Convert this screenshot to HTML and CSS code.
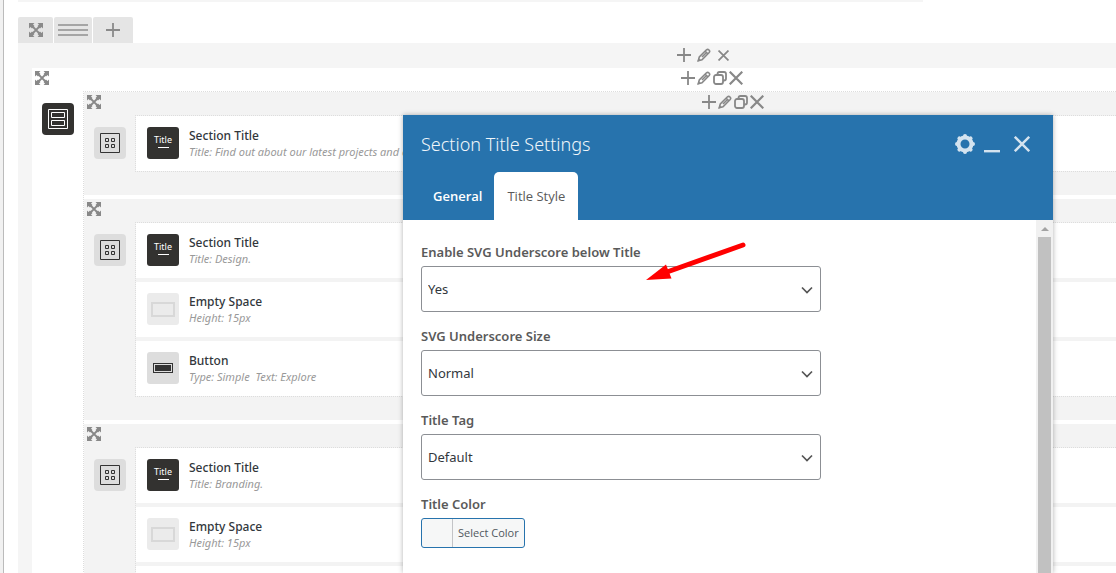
FILE: index.html
```html
<!DOCTYPE html>
<html lang="en">
<head>
    <meta charset="UTF-8">
    <meta name="viewport" content="width=device-width, initial-scale=1.0">
    <title>Page Builder</title>
    <link rel="stylesheet" href="styles.css">
</head>
<body>
    <!-- Shared icons -->
    <svg class="sprite" aria-hidden="true">
        <symbol id="move" viewBox="0 0 14 14">
            <path d="M0 0h5.500L4 1.500 5.500 3 3 5.500 1.500 4 0 5.500zM14 0v5.500L12.500 4 11 5.500 8.500 3 10 1.500 8.500 0zM0 14V8.500L1.500 10 3 8.500 5.500 11 4 12.500 5.500 14zM14 14H8.500l1.500-1.500L8.500 11 11 8.500l1.500 1.500L14 8.500z"/>
            <path class="line" d="M3 3l8 8M11 3l-8 8"/>
        </symbol>
        <symbol id="plus" viewBox="0 0 14 14"><path class="line" d="M7 0v14M0 7h14"/></symbol>
        <symbol id="edit" viewBox="0 0 14 14">
            <path class="outline" d="M1.300 12.700l1-3.700 7.200-7.200q1.200-1.100 2.500.2t.2 2.500L5 11.700zM8.200 3.200l2.600 2.600M5 9l4-4"/>
            <path d="M.3 13.700l1.200-3.700 2.500 2.500z"/>
        </symbol>
        <symbol id="copy" viewBox="0 0 14 14">
            <rect class="line" x="1" y="4" width="9" height="9" rx="2"/>
            <path class="line" d="M4.500 4V3q0-2 2-2H11q2 0 2 2v4.500q0 2-2 2h-1"/>
        </symbol>
        <symbol id="close" viewBox="0 0 14 14"><path class="cross" d="M.7.7l12.600 12.600M13.300.7L.7 13.300"/></symbol>
        <symbol id="row" viewBox="0 0 20 20"><path class="thin" d="M.5.500h19v19H.5zM3.500 3.500h13v5h-13zM3.500 11.500h13v5h-13z"/></symbol>
        <symbol id="grid" viewBox="0 0 20 20"><path class="thin" d="M.5.500h19v19H.5zM5.500 5.500h3v3h-3zM11.500 5.500h3v3h-3zM5.500 11.500h3v3h-3zM11.500 11.500h3v3h-3z"/></symbol>
    </svg>

    <div class="page">
        <div class="previous"></div>

        <div class="tabs">
            <button class="tab tab-move" aria-label="Move section"><svg class="icon"><use href="#move"/></svg></button>
            <button class="tab tab-layout" aria-label="Row layout"><span class="bars"></span></button>
            <button class="tab tab-add" aria-label="Add row"><svg class="icon"><use href="#plus"/></svg></button>
        </div>

        <div class="section">
            <div class="controls section-controls">
                <button aria-label="Add"><svg class="icon"><use href="#plus"/></svg></button>
                <button aria-label="Edit"><svg class="icon"><use href="#edit"/></svg></button>
                <button aria-label="Delete"><svg class="icon small"><use href="#close"/></svg></button>
            </div>

            <div class="row">
                <div class="bar">
                    <button class="move" aria-label="Move row"><svg class="icon"><use href="#move"/></svg></button>
                    <div class="controls">
                        <button aria-label="Add"><svg class="icon"><use href="#plus"/></svg></button>
                        <button aria-label="Edit"><svg class="icon pen"><use href="#edit"/></svg></button>
                        <button aria-label="Copy"><svg class="icon"><use href="#copy"/></svg></button>
                        <button aria-label="Delete"><svg class="icon"><use href="#close"/></svg></button>
                    </div>
                </div>

                <div class="row-body">
                    <div class="handle dark"><svg class="badge"><use href="#row"/></svg></div>

                    <div class="columns">
                        <div class="column">
                            <div class="bar">
                                <button class="move" aria-label="Move column"><svg class="icon"><use href="#move"/></svg></button>
                                <div class="controls">
                                    <button aria-label="Add"><svg class="icon"><use href="#plus"/></svg></button>
                                    <button aria-label="Edit"><svg class="icon pen"><use href="#edit"/></svg></button>
                                    <button aria-label="Copy"><svg class="icon"><use href="#copy"/></svg></button>
                                    <button aria-label="Delete"><svg class="icon"><use href="#close"/></svg></button>
                                </div>
                            </div>
                            <div class="column-body">
                                <div class="handle"><svg class="badge"><use href="#grid"/></svg></div>
                                <div class="elements">
                                    <div class="element">
                                        <div class="thumb title-thumb">Title</div>
                                        <div class="text">
                                            <h4>Section Title</h4>
                                            <p>Title: Find out about our latest projects and ex</p>
                                        </div>
                                    </div>
                                </div>
                            </div>
                        </div>

                        <div class="column">
                            <div class="bar">
                                <button class="move" aria-label="Move column"><svg class="icon"><use href="#move"/></svg></button>
                            </div>
                            <div class="column-body">
                                <div class="handle"><svg class="badge"><use href="#grid"/></svg></div>
                                <div class="elements">
                                    <div class="element">
                                        <div class="thumb title-thumb">Title</div>
                                        <div class="text">
                                            <h4>Section Title</h4>
                                            <p>Title: Design.</p>
                                        </div>
                                    </div>
                                    <div class="element">
                                        <div class="thumb space-thumb"></div>
                                        <div class="text">
                                            <h4>Empty Space</h4>
                                            <p>Height: 15px</p>
                                        </div>
                                    </div>
                                    <div class="element">
                                        <div class="thumb button-thumb"></div>
                                        <div class="text">
                                            <h4>Button</h4>
                                            <p>Type: Simple&nbsp; Text: Explore</p>
                                        </div>
                                    </div>
                                </div>
                            </div>
                        </div>

                        <div class="column">
                            <div class="bar">
                                <button class="move" aria-label="Move column"><svg class="icon"><use href="#move"/></svg></button>
                            </div>
                            <div class="column-body">
                                <div class="handle"><svg class="badge"><use href="#grid"/></svg></div>
                                <div class="elements">
                                    <div class="element">
                                        <div class="thumb title-thumb">Title</div>
                                        <div class="text">
                                            <h4>Section Title</h4>
                                            <p>Title: Branding.</p>
                                        </div>
                                    </div>
                                    <div class="element">
                                        <div class="thumb space-thumb"></div>
                                        <div class="text">
                                            <h4>Empty Space</h4>
                                            <p>Height: 15px</p>
                                        </div>
                                    </div>
                                    <div class="element"></div>
                                </div>
                            </div>
                        </div>
                    </div>
                </div>
            </div>
        </div>
    </div>

    <div class="dialog" role="dialog" aria-labelledby="dialog-title">
        <div class="dialog-header">
            <div class="dialog-top">
                <h2 id="dialog-title">Section Title Settings</h2>
                <div class="dialog-actions">
                    <button aria-label="Settings">
                        <svg width="20" height="20" viewBox="0 0 20 20" fill="none" stroke="currentColor">
                            <circle cx="10" cy="10" r="6.500" stroke-width="4"/>
                            <path stroke-width="4" stroke-linecap="round" d="M10 2v.5M10 17.500v.5M2 10h.5M17.500 10h.5M4.400 4.400l.4.4M15.200 15.200l.4.4M15.600 4.400l-.4.4M4.800 15.200l-.4.4"/>
                        </svg>
                    </button>
                    <button aria-label="Minimize">
                        <svg width="16" height="20" viewBox="0 0 16 20"><path fill="currentColor" d="M0 16h16v2.400H0z"/></svg>
                    </button>
                    <button aria-label="Close">
                        <svg width="16" height="16" viewBox="0 0 16 16"><path fill="none" stroke="currentColor" stroke-width="2.400" d="M.8.8l14.400 14.400M15.200.8L.8 15.200"/></svg>
                    </button>
                </div>
            </div>
            <div class="dialog-tabs">
                <button class="dialog-tab">General</button>
                <button class="dialog-tab active">Title Style</button>
            </div>
        </div>

        <div class="dialog-body">
            <form class="fields">
                <div class="field">
                    <label for="underscore">Enable SVG Underscore below Title</label>
                    <select id="underscore"><option>Yes</option><option>No</option></select>
                </div>
                <div class="field">
                    <label for="size">SVG Underscore Size</label>
                    <select id="size"><option>Normal</option><option>Large</option></select>
                </div>
                <div class="field">
                    <label for="tag">Title Tag</label>
                    <select id="tag"><option>Default</option><option>h1</option><option>h2</option></select>
                </div>
                <div class="field">
                    <label for="color">Title Color</label>
                    <button type="button" id="color" class="color-button"><span>Select Color</span></button>
                </div>
            </form>
            <div class="scrollbar">
                <div class="scroll-arrow"></div>
                <div class="scroll-thumb"></div>
            </div>
        </div>

        <!-- Pointer to the underscore option -->
        <svg class="pointer" width="102" height="42" viewBox="0 0 102 42" aria-hidden="true">
            <path d="M98 4L22 31" stroke="#f00" stroke-width="5" stroke-linecap="round"/>
            <path d="M1 39L21 23.500l5.500 14z" fill="#f00"/>
        </svg>
    </div>
</body>
</html>
```

FILE: styles.css
```css
*, *::before, *::after {
    box-sizing: border-box;
}
body {
    margin: 0;
    height: 100vh;
    overflow: hidden;
    position: relative;
    background-color: #f1f1f1;
    font-family: "Noto Sans", "Open Sans", sans-serif;
    font-size: 13px;
    color: #32373c;
}
button {
    border: none;
    padding: 0;
    background: none;
    font-family: inherit;
    color: inherit;
    cursor: pointer;
    display: flex;
    align-items: center;
    justify-content: center;
}
h2, h4, p {
    margin: 0;
}
.sprite {
    position: absolute;
    width: 0;
    height: 0;
}
.line {
    fill: none;
    stroke: currentColor;
    stroke-width: 1.8;
}
.outline {
    fill: none;
    stroke: currentColor;
    stroke-width: 1.6;
}
.cross {
    fill: none;
    stroke: currentColor;
    stroke-width: 2.2;
}
.thin {
    fill: none;
    stroke: currentColor;
    stroke-width: 1;
}
.icon {
    width: 14px;
    height: 14px;
    fill: currentColor;
    display: block;
}
.icon.small {
    width: 11px;
    height: 11px;
}

/* Builder */
.page {
    height: 100vh;
    overflow: hidden;
    margin-left: 3px;
    padding-left: 14px;
    border-left: 1px solid #bbb;
    background-color: #fff;
}
.previous {
    height: 2px;
    width: 82.4%;
    background-color: #f5f5f5;
}
.tabs {
    display: flex;
    gap: 1px;
    margin-top: 15px;
}
.tab {
    height: 26px;
    background-color: #e5e5e5;
    color: #8a8a8a;
    border-radius: 2px 2px 0 0;
}
.tab-move {
    width: 35px;
}
.tab-layout {
    width: 38px;
}
.tab-add {
    width: 40px;
}
.bars {
    width: 30px;
    height: 12px;
    border-top: 2px solid #a5a5a5;
    border-bottom: 2px solid #a5a5a5;
    background: linear-gradient(#a5a5a5, #a5a5a5) center / 100% 2px no-repeat;
}
.section {
    background-color: #f5f5f5;
    padding-left: 14px;
}
.controls {
    display: flex;
    align-items: center;
    gap: 2px;
    color: #888;
}
.section-controls {
    height: 25px;
    padding: 0 0 1px 59.5%;
    gap: 6px;
}
.section-controls .small {
    margin-left: 1px;
}
.row {
    background-color: #fff;
}
.bar {
    display: flex;
    align-items: center;
    height: 23px;
    padding-bottom: 3px;
}
.bar .move {
    width: 20px;
    color: #888;
}
.bar .controls {
    margin-left: calc(60% - 21px);
}
.row-body {
    display: flex;
}
.row-body > .handle {
    margin: 12px 9px 0 10px;
}
.handle {
    display: flex;
    align-items: center;
    justify-content: center;
    flex: none;
    width: 32px;
    height: 32px;
    border-radius: 4px;
    background-color: #ddd;
    color: #333;
}
.handle.dark {
    background-color: #333230;
    color: #fff;
}
.badge {
    width: 20px;
    height: 20px;
}
.columns {
    flex: 1;
    display: flex;
    flex-direction: column;
    gap: 4px;
    min-width: 0;
    border: 1px dotted #ddd;
    border-right: none;
}
.column {
    background-color: #f3f3f3;
    padding-bottom: 23px;
}
.column-body {
    display: flex;
    padding-left: 10px;
}
.column-body > .handle {
    margin: 12px 9px 0 0;
}
.elements {
    flex: 1;
    min-width: 0;
    display: flex;
    flex-direction: column;
    gap: 4px;
    border: 1px dotted #ddd;
    border-right: none;
}
.element {
    display: flex;
    gap: 10px;
    height: 55px;
    padding: 11px;
    background-color: #fff;
}
.thumb {
    flex: none;
    display: flex;
    align-items: center;
    justify-content: center;
    width: 32px;
    height: 32px;
    border-radius: 3px;
    background-color: #ddd;
}
.title-thumb {
    flex-direction: column;
    gap: 1px;
    padding-bottom: 4px;
    background-color: #333230;
    color: #fff;
    font-size: 9px;
    line-height: 12px;
}
.title-thumb::after {
    content: '';
    width: 11px;
    height: 1px;
    background-color: #fff;
}
.space-thumb {
    background-color: #ebebeb;
}
.space-thumb::before {
    content: '';
    width: 24px;
    height: 15px;
    border: 2px solid #d8d8d8;
}
.button-thumb::before {
    content: '';
    width: 20px;
    height: 10px;
    padding: 1px;
    border: 1px solid #333;
    background-color: #333;
    background-clip: content-box;
}
.text {
    white-space: nowrap;
}
.text h4 {
    font-size: 12px;
    line-height: 18px;
    font-weight: 500;
}
.text p {
    font-size: 11px;
    line-height: 14px;
    font-style: italic;
    color: #999;
}

/* Settings dialog */
.dialog {
    position: absolute;
    top: 115px;
    bottom: 0;
    left: 403px;
    width: 650px;
    display: flex;
    flex-direction: column;
    background-color: #fff;
    box-shadow: 0 0 5px rgba(0, 0, 0, 0.3);
}
.dialog-header {
    background-color: #2773ad;
    color: #fff;
}
.dialog-top {
    display: flex;
    align-items: center;
    justify-content: space-between;
    height: 57px;
    padding: 0 23px 0 18px;
}
.dialog-top h2 {
    font-size: 18px;
    font-weight: 300;
    color: #f0f6fa;
}
.dialog-actions {
    display: flex;
    align-items: center;
    color: #d4e3ef;
}
.dialog-actions button:nth-child(2) {
    margin: 0 14px 0 9px;
}
.dialog-tabs {
    display: flex;
    padding-left: 18px;
}
.dialog-tab {
    height: 48px;
    padding: 0 12px;
    font-family: "Open Sans", sans-serif;
    font-size: 13px;
    font-weight: 600;
}
.dialog-tab.active {
    background-color: #fff;
    color: #5a5a5a;
    font-weight: 400;
    border-radius: 5px 5px 0 0;
    padding: 0 13px;
}
.dialog-body {
    flex: 1;
    display: flex;
    min-height: 0;
}
.fields {
    flex: 1;
    display: flex;
    flex-direction: column;
    gap: 14px;
    padding: 22px 18px 0;
    overflow: hidden;
}
.field {
    display: flex;
    flex-direction: column;
    align-items: flex-start;
    gap: 4px;
}
.field label {
    font-size: 13px;
    line-height: 20px;
    font-weight: 600;
    color: #5a5a5a;
}
.field select {
    appearance: none;
    width: 400px;
    max-width: 100%;
    height: 46px;
    padding: 0 24px 0 6px;
    border: 1px solid #8c8f94;
    border-radius: 3px;
    background: #fff url("data:image/svg+xml,%3Csvg xmlns='http://www.w3.org/2000/svg' width='12' height='12' viewBox='0 0 12 12'%3E%3Cpath d='M1 4.500l5 5 5-5' fill='none' stroke='%23555' stroke-width='1.700'/%3E%3C/svg%3E") right 7px center no-repeat;
    font-family: inherit;
    font-size: 13px;
    color: #32373c;
}
.color-button {
    height: 30px;
    padding-left: 30px;
    border: 1px solid #2773ad;
    border-radius: 3px;
    background-color: #f6f7f7;
    font-family: "Open Sans", sans-serif;
    font-size: 11px;
    color: #50575e;
}
.color-button span {
    padding: 0 5px;
    line-height: 28px;
    border-left: 1px solid #c3c4c7;
}
.scrollbar {
    width: 17px;
    display: flex;
    flex-direction: column;
    align-items: center;
    background-color: #f1f1f1;
}
.scroll-arrow {
    margin: 7px 0 6px;
    border: 4px solid transparent;
    border-top: none;
    border-bottom-color: #a3a3a3;
}
.scroll-thumb {
    flex: 1;
    width: 13px;
    background-color: #c1c1c1;
}
.pointer {
    position: absolute;
    top: 126px;
    left: 242px;
    fill: none;
}
```
